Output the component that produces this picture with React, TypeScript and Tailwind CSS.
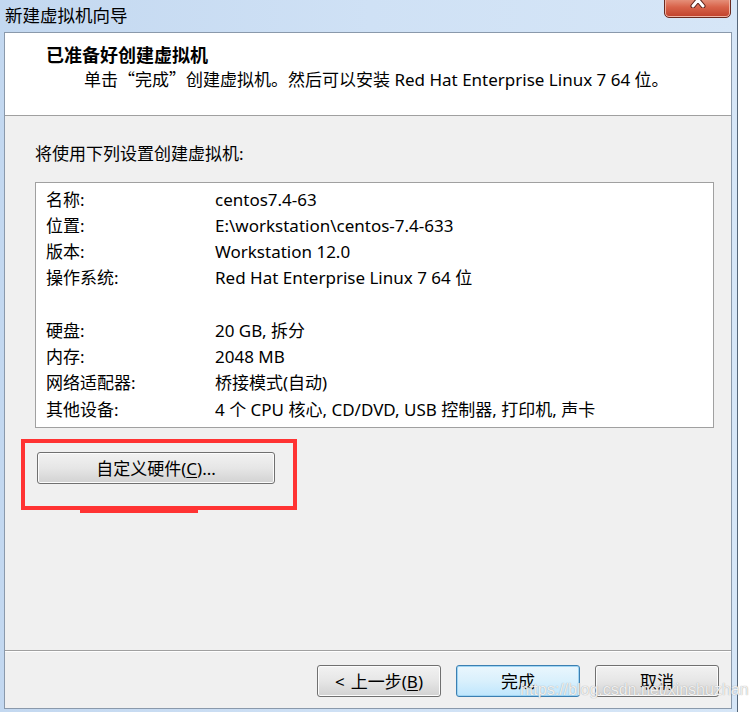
import React from "react";

const font = { fontFamily: '"Noto Sans", "Noto Sans CJK SC", sans-serif' };
const cjk = { fontFamily: '"Noto Sans CJK SC", sans-serif' };

function WinButton({
  children,
  focused = false,
  className = "",
}: {
  children: React.ReactNode;
  focused?: boolean;
  className?: string;
}) {
  return (
    <div
      className={
        "flex h-[32px] items-center justify-center rounded-[3px] border text-[17px] leading-none text-black " +
        (focused
          ? "border-[#3c7fb1] bg-gradient-to-b from-[#eaf6fd] via-[#d9f0fc] to-[#bee6fd] shadow-[inset_0_0_0_1px_#9fd5f4] "
          : "border-[#707070] bg-gradient-to-b from-[#f2f2f2] via-[#e6e6e6] to-[#d2d2d2] shadow-[inset_0_0_0_1px_#fcfcfc] ") +
        className
      }
    >
      {children}
    </div>
  );
}

const rows: [string, string][] = [
  ["名称:", "centos7.4-63"],
  ["位置:", "E:\\workstation\\centos-7.4-633"],
  ["版本:", "Workstation 12.0"],
  ["操作系统:", "Red Hat Enterprise Linux 7 64 位"],
  ["", ""],
  ["硬盘:", "20 GB, 拆分"],
  ["内存:", "2048 MB"],
  ["网络适配器:", "桥接模式(自动)"],
  ["其他设备:", "4 个 CPU 核心, CD/DVD, USB 控制器, 打印机, 声卡"],
];

export default function App() {
  return (
    <div className="relative h-[712px] w-[754px] overflow-hidden bg-white" style={font}>
      <div className="flex h-[712px] w-[738px] flex-col bg-gradient-to-r from-[#c3d8f0] via-[#cfe1f5] to-[#d6e6f7] border-r border-[#56677a]">
        {/* title bar */}
        <div className="relative flex h-[32px] shrink-0 items-center pl-[5px]">
          <span className="text-[17.5px] leading-none text-black">新建虚拟机向导</span>
          <div className="absolute left-[664px] top-[-4px] h-[22px] w-[67px] overflow-hidden rounded-b-[5px] border border-[#6a2a20] bg-gradient-to-b from-[#e9a08c] via-[#d8634a] to-[#c0402a] shadow-[inset_0_0_0_1px_#f0b3a3]">
            <svg className="absolute left-[25px] top-[-3px]" width="16" height="14" viewBox="0 0 16 14">
              <path d="M3 0 L13 12 M13 0 L3 12" stroke="#5a2018" strokeWidth="5" strokeLinecap="round" />
              <path d="M3 0 L13 12 M13 0 L3 12" stroke="#ffffff" strokeWidth="3" strokeLinecap="round" />
            </svg>
          </div>
        </div>

        {/* client area */}
        <div className="ml-[4px] flex h-[677px] w-[728px] flex-col border border-[#8a99ab] bg-[#f0f0f0]">
          {/* header */}
          <div className="h-[83px] shrink-0 border-b border-[#a0a0a0] bg-white pl-[41px] pt-[10px]">
            <div className="text-[18px] font-bold leading-[24px] text-black">已准备好创建虚拟机</div>
            <div className="pl-[38px] text-[17px] leading-[24px] text-black">
              单击<span style={cjk}>“</span>完成<span style={cjk}>”</span>创建虚拟机。然后可以安装 Red Hat Enterprise Linux 7 64 位。
            </div>
          </div>

          {/* body */}
          <div className="flex flex-1 flex-col pl-[30px] pt-[26px]">
            <div className="text-[17px] leading-[24px] text-black">将使用下列设置创建虚拟机:</div>
            <div className="mt-[16px] h-[246px] w-[679px] border border-[#a0a0a0] bg-white pl-[10px] pt-[3px]">
              {rows.map(([k, v], i) => (
                <div key={i} className="flex h-[26.25px] items-center text-[17px] leading-none text-black">
                  <span className="w-[169px] shrink-0">{k}</span>
                  <span>{v}</span>
                </div>
              ))}
            </div>

            <div className="ml-[-14px] mt-[11px] h-[71px] w-[276px] border-4 border-[#ff3333] pl-[12px] pt-[9px]">
              <WinButton className="w-[238px]">
                自定义硬件(<span className="underline underline-offset-2">C</span>)...
              </WinButton>
            </div>
            <div className="ml-[45px] h-[3px] w-[118px] bg-[#ff3333]" />
          </div>

          {/* footer */}
          <div className="flex h-[58px] shrink-0 justify-end gap-[15px] border-t border-[#a0a0a0] pr-[12px] pt-[14px] shadow-[inset_0_1px_0_#ffffff]">
            <WinButton className="w-[124px]">
              <span className="mr-[6px]">&lt;</span>上一步(<span className="underline underline-offset-2">B</span>)
            </WinButton>
            <WinButton focused className="w-[124px]">
              完成
            </WinButton>
            <WinButton className="w-[124px]">取消</WinButton>
          </div>
        </div>
      </div>

      {/* watermark */}
      <div
        className="absolute left-[520px] top-[682px] whitespace-nowrap text-[16px] leading-none text-white/85"
        style={{ fontFamily: '"Liberation Sans", Arial, sans-serif', textShadow: "0 0 1px #8a8a8a" }}
      >
        https://blog.csdn.net/xinshuzhan
      </div>
    </div>
  );
}
